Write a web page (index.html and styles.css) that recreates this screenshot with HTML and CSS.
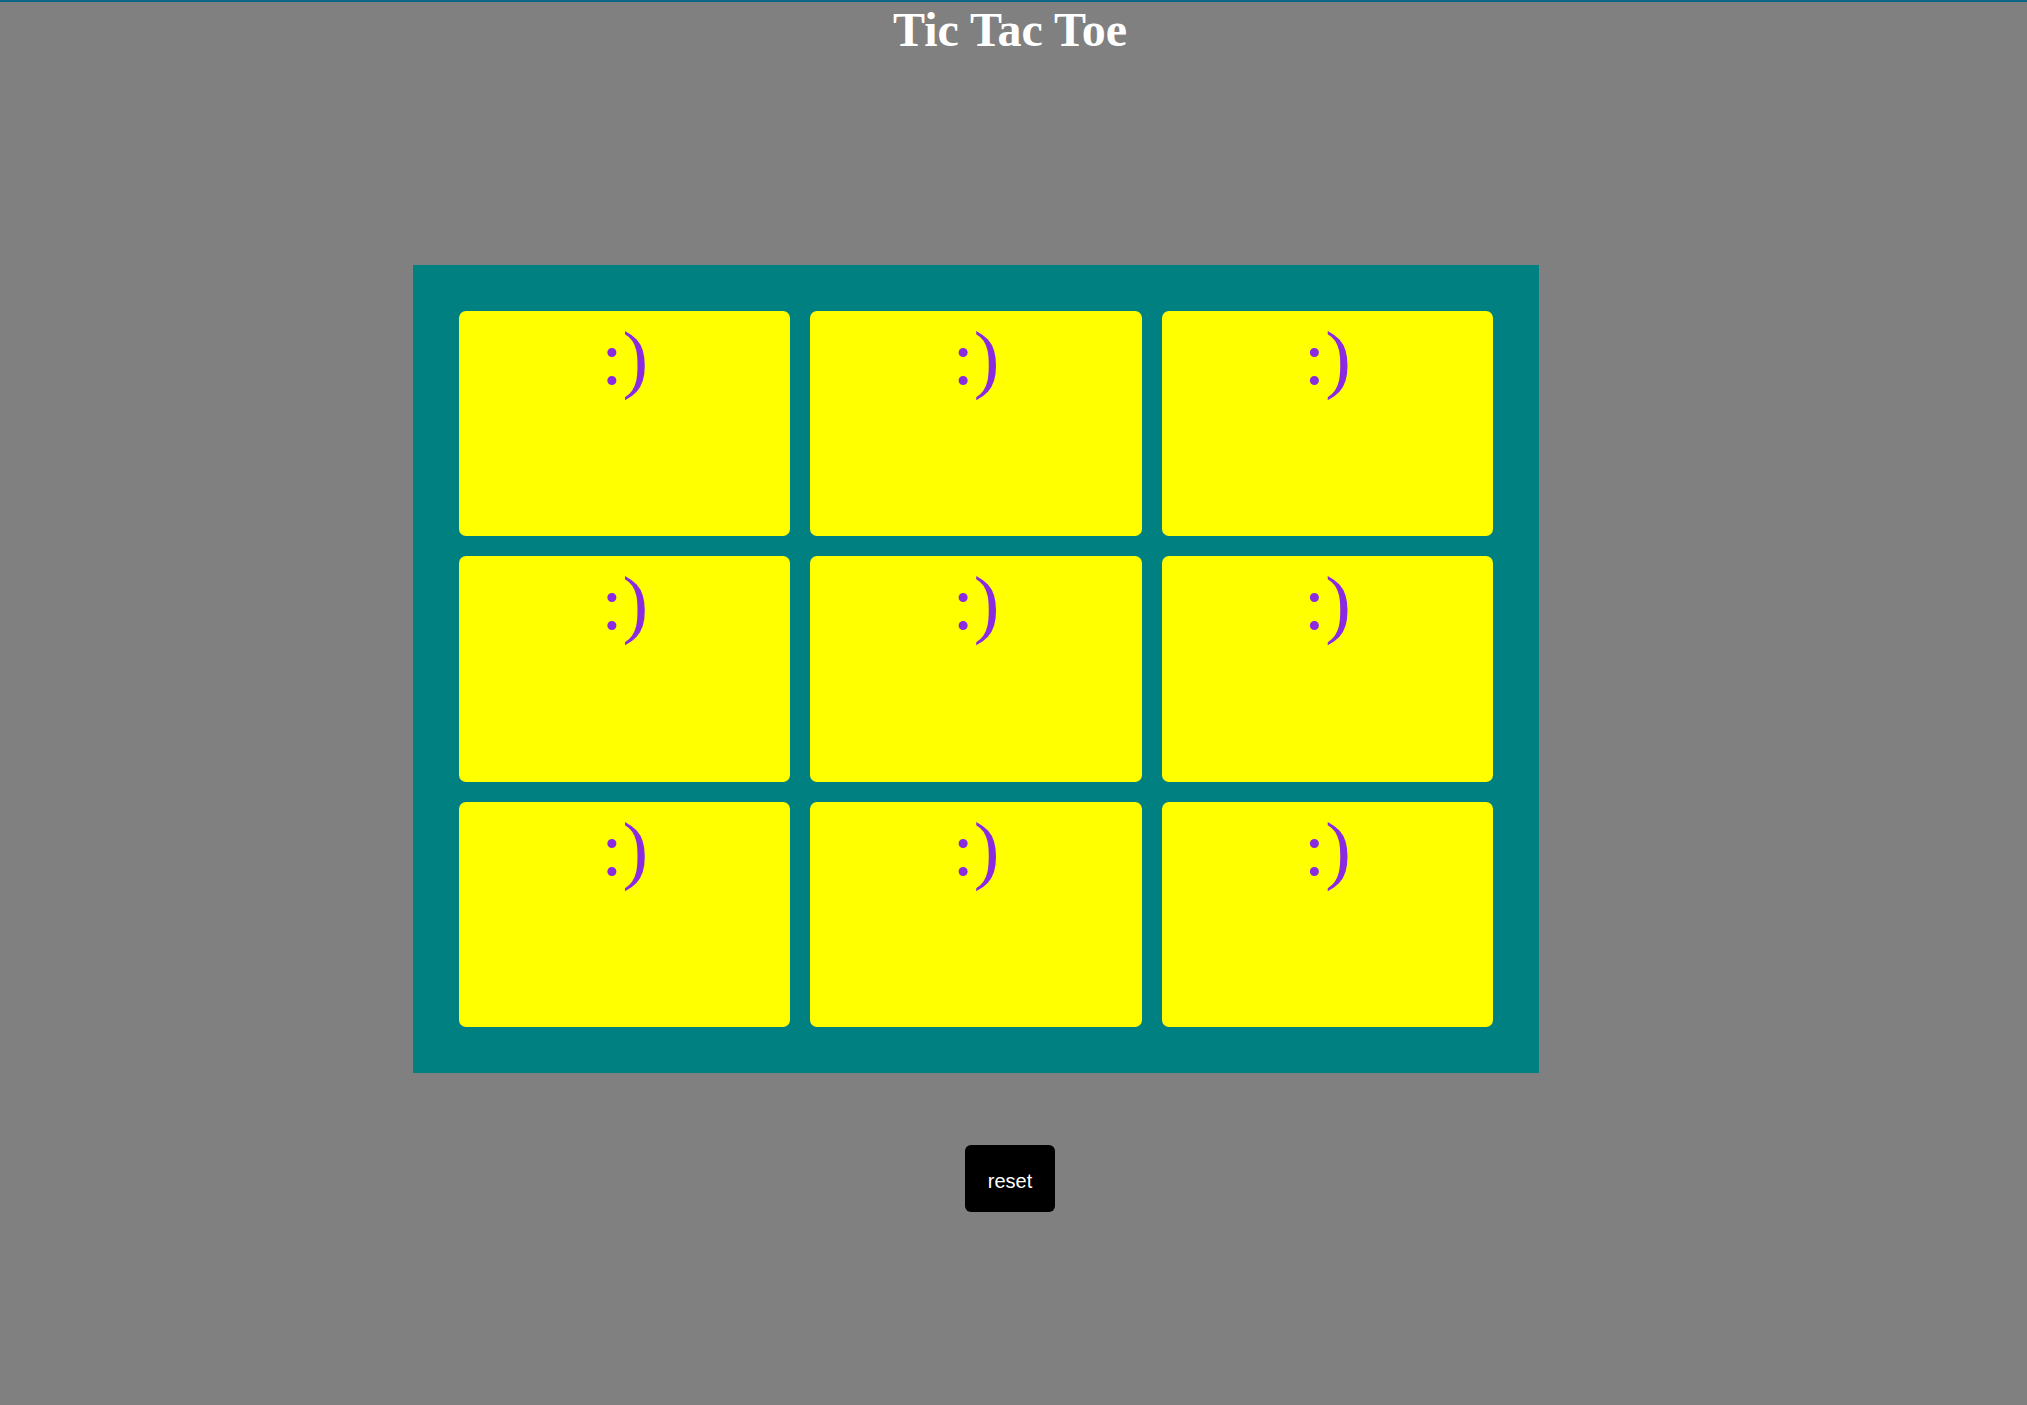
FILE: index.html
```html
<!DOCTYPE html>
<html>
<head>
<meta charset="utf-8">
<title>Tic Tac Toe</title>
<link rel="stylesheet" href="styles.css">
</head>
<body>
<div class="page">
  <h1 class="title">Tic Tac Toe</h1>
  <div class="board">
    <div class="cell">:)</div>
    <div class="cell">:)</div>
    <div class="cell">:)</div>
    <div class="cell">:)</div>
    <div class="cell">:)</div>
    <div class="cell">:)</div>
    <div class="cell">:)</div>
    <div class="cell">:)</div>
    <div class="cell">:)</div>
  </div>
  <div class="controls">
    <button class="reset">reset</button>
  </div>
</div>
</body>
</html>
```
FILE: styles.css
```css
html, body {
  margin: 0;
  padding: 0;
}
body {
  background: #808080;
  border-top: 2px solid #0b6589;
  min-height: 1403px;
  box-sizing: border-box;
}
.page {
  padding-right: 7px;
}
.title {
  margin: 1px 0 0;
  font: bold 48px/54px "Liberation Serif", "Times New Roman", serif;
  text-align: center;
  color: #ffffff;
}
.board {
  margin: 208px 0 0 413px;
  width: 1126px;
  height: 808px;
  box-sizing: border-box;
  padding: 46px;
  background: #008080;
  display: grid;
  grid-template-columns: repeat(3, 1fr);
  grid-template-rows: repeat(3, 1fr);
  gap: 20px;
}
.cell {
  background: #ffff00;
  border-radius: 7px;
  text-align: center;
  color: #8a2be2;
  font: 77px/1.15 "Liberation Serif", "Times New Roman", serif;
  padding-top: 3px;
}
.controls {
  display: flex;
  justify-content: center;
  margin-top: 72px;
}
.reset {
  width: 90px;
  height: 67px;
  background: #000000;
  color: #ffffff;
  border: none;
  border-radius: 6px;
  font: 20px "Liberation Sans", Arial, sans-serif;
  padding: 5px 0 0;
}
```
